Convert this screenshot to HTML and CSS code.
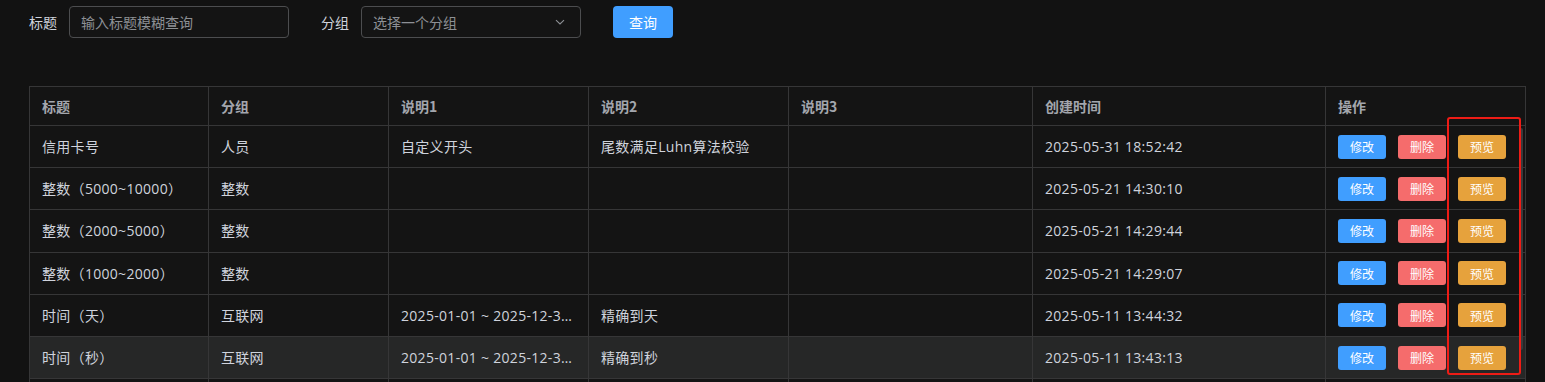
FILE: index.html
```html
<!DOCTYPE html>
<html lang="zh-CN">
<head>
    <meta charset="UTF-8">
    <meta name="viewport" content="width=device-width, initial-scale=1.0">
    <title>数据模板</title>
    <link rel="stylesheet" href="styles.css">
</head>
<body>
    <div class="page">
        <form class="search-bar" onsubmit="return false;">
            <label for="title">标题</label>
            <input type="text" id="title" class="text-input" placeholder="输入标题模糊查询">
            <label for="group" class="group-label">分组</label>
            <div class="select" id="group">
                <span class="select-placeholder">选择一个分组</span>
                <svg class="select-arrow" viewBox="0 0 12 12" width="12" height="12">
                    <path d="M2 4.2 L6 8 L10 4.2" fill="none" stroke="#8d9095" stroke-width="1.1"/>
                </svg>
            </div>
            <button class="btn btn-primary search-btn">查询</button>
        </form>

        <div class="table-wrap">
            <table>
                <colgroup>
                    <col style="width: 179px">
                    <col style="width: 180px">
                    <col style="width: 200px">
                    <col style="width: 200px">
                    <col style="width: 244px">
                    <col style="width: 293px">
                    <col style="width: 200px">
                </colgroup>
                <thead>
                    <tr>
                        <th>标题</th>
                        <th>分组</th>
                        <th>说明1</th>
                        <th>说明2</th>
                        <th>说明3</th>
                        <th>创建时间</th>
                        <th>操作</th>
                    </tr>
                </thead>
                <tbody id="rows"></tbody>
            </table>
            <div class="scroll-thumb"></div>
            <div class="mark-box"></div>
        </div>
    </div>

    <script>
        const rows = [
            ['信用卡号', '人员', '自定义开头', '尾数满足Luhn算法校验', '', '2025-05-31 18:52:42'],
            ['整数（5000~10000）', '整数', '', '', '', '2025-05-21 14:30:10'],
            ['整数（2000~5000）', '整数', '', '', '', '2025-05-21 14:29:44'],
            ['整数（1000~2000）', '整数', '', '', '', '2025-05-21 14:29:07'],
            ['时间（天）', '互联网', '2025-01-01 ~ 2025-12-31 23:59:59', '精确到天', '', '2025-05-11 13:44:32'],
            ['时间（秒）', '互联网', '2025-01-01 ~ 2025-12-31 23:59:59', '精确到秒', '', '2025-05-11 13:43:13'],
            ['时间（分）', '互联网', '2025-01-01 ~ 2025-12-31 23:59:59', '精确到分', '', '2025-05-11 13:42:50']
        ];

        let html = '';
        rows.forEach((r, i) => {
            // the sixth row is under the mouse in the screenshot
            const cls = i === 5 ? ' class="hover"' : '';
            html += `<tr${cls}>`;
            r.forEach(v => { html += `<td><div class="cell">${v}</div></td>`; });
            html += `<td><div class="cell actions">
                        <button class="btn btn-small btn-primary">修改</button>
                        <button class="btn btn-small btn-danger">删除</button>
                        <button class="btn btn-small btn-warning">预览</button>
                    </div></td></tr>`;
        });
        document.getElementById('rows').innerHTML = html;
    </script>
</body>
</html>
```

FILE: styles.css
```css
html, body {
    margin: 0;
    padding: 0;
    background-color: #121212;
    overflow: hidden;
}
body {
    font-family: "Noto Sans CJK SC", "Noto Sans", sans-serif;
    font-size: 14px;
    color: #cfd3dc;
}
.page {
    padding: 6px 0 0 29px;
}
.search-bar {
    display: flex;
    align-items: center;
    height: 32px;
    margin: 0;
}
.search-bar label {
    color: #cfd3dc;
    margin-right: 12px;
    line-height: 32px;
}
.search-bar .group-label {
    margin-left: 32px;
}
.text-input {
    width: 220px;
    height: 32px;
    box-sizing: border-box;
    padding: 0 11px;
    background-color: #141414;
    border: 1px solid #4c4d4f;
    border-radius: 4px;
    color: #cfd3dc;
    font-family: inherit;
    font-size: 14px;
    outline: none;
}
.text-input::placeholder {
    color: #8d9095;
}
.select {
    width: 220px;
    height: 32px;
    box-sizing: border-box;
    padding: 0 12px 0 11px;
    background-color: #141414;
    border: 1px solid #4c4d4f;
    border-radius: 4px;
    display: flex;
    align-items: center;
    justify-content: space-between;
}
.select-placeholder {
    color: #8d9095;
}
.select-arrow {
    margin-right: 2px;
}
.btn {
    border: none;
    color: #fff;
    font-family: inherit;
    cursor: pointer;
    border-radius: 4px;
    padding: 0;
}
.btn-primary {
    background-color: #409eff;
}
.btn-danger {
    background-color: #f56c6c;
}
.btn-warning {
    background-color: #e6a23c;
}
.search-btn {
    margin-left: 32px;
    width: 60px;
    height: 32px;
    font-size: 14px;
}
.btn-small {
    width: 48px;
    height: 24px;
    font-size: 12px;
    border-radius: 3px;
}

.table-wrap {
    position: relative;
    width: 1496px;
    margin-top: 48px;
}
table {
    width: 1496px;
    table-layout: fixed;
    border-collapse: collapse;
    background-color: #141414;
    border: 1px solid #363637;
}
th, td {
    border: 1px solid #363637;
    padding: 0;
    text-align: left;
}
th {
    height: 38px;
    padding: 0 12px;
    color: #a3a6ad;
    font-weight: bold;
}
td {
    height: 41.2px;
}
.cell {
    padding: 0 12px;
    font-family: "Open Sans", "Noto Sans CJK SC", sans-serif;
    letter-spacing: 0.3px;
    white-space: nowrap;
    overflow: hidden;
    text-overflow: ellipsis;
    line-height: 23px;
}
tr.hover td {
    background-color: #262727;
}
.actions {
    display: flex;
    gap: 12px;
    overflow: visible;
    letter-spacing: 0;
    font-family: "Noto Sans CJK SC", sans-serif;
}
.scroll-thumb {
    position: absolute;
    left: 1490px;
    top: 42px;
    width: 4px;
    height: 222px;
    border-radius: 2px;
    background-color: #3a3a3b;
}
.mark-box {
    position: absolute;
    left: 1418px;
    top: 31px;
    width: 70px;
    height: 254px;
    border: 2px solid #ee1c16;
    border-radius: 3px;
}
```
